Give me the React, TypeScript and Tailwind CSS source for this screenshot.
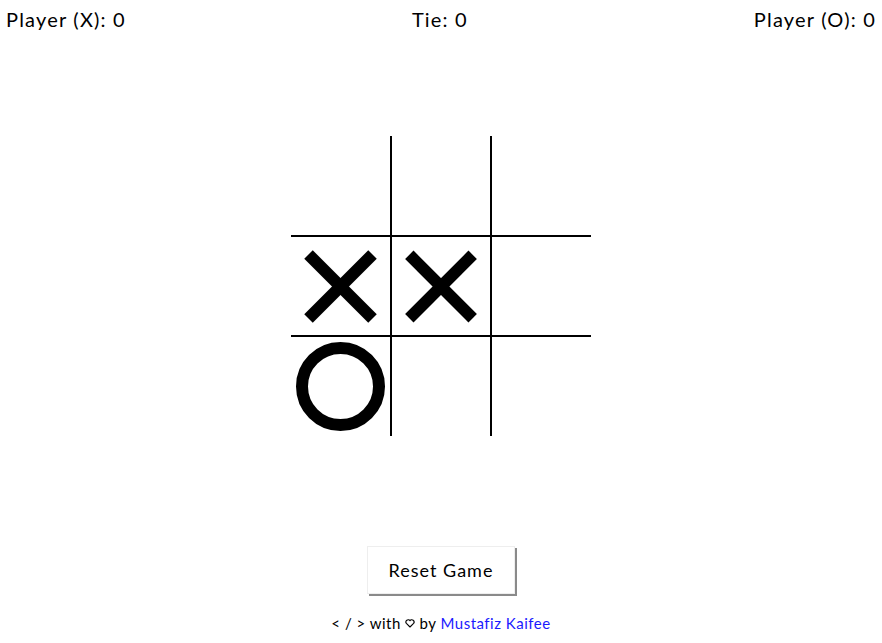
import { useState } from 'react';

type Mark = 'X' | 'O' | null;

function XMark() {
  return (
    <svg width="99" height="99" viewBox="0 0 99 99" className="block">
      <line x1="17.5" y1="17.5" x2="81.5" y2="81.5" stroke="black" strokeWidth="12" />
      <line x1="81.5" y1="17.5" x2="17.5" y2="81.5" stroke="black" strokeWidth="12" />
    </svg>
  );
}

function OMark() {
  return (
    <svg width="99" height="99" viewBox="0 0 99 99" className="block">
      <circle cx="49.5" cy="49.5" r="38.5" fill="none" stroke="black" strokeWidth="12" />
    </svg>
  );
}

function Heart() {
  return (
    <svg width="10" height="9" viewBox="0 0 10 9" className="inline-block align-[1px]" aria-label="love">
      <path
        d="M5 8 L1.4 4.4 A2.1 2.1 0 0 1 5 1.7 A2.1 2.1 0 0 1 8.6 4.4 Z"
        fill="none"
        stroke="black"
        strokeWidth="1.1"
        strokeLinejoin="round"
      />
    </svg>
  );
}

const cellBorders = [
  'border-r-2 border-b-2',
  'border-r-2 border-b-2',
  'border-b-2',
  'border-r-2 border-b-2',
  'border-r-2 border-b-2',
  'border-b-2',
  'border-r-2',
  'border-r-2',
  '',
];

export default function App() {
  const [board] = useState<Mark[]>([null, null, null, 'X', 'X', null, 'O', null, null]);

  return (
    <div className="min-h-screen bg-white text-black font-['Lato','Open_Sans',sans-serif]">
      <header className="flex justify-between items-start px-[6px] pt-[5px] h-10 text-[20px] leading-7 tracking-[1.2px]">
        <span>Player (X): 0</span>
        <span>Tie: 0</span>
        <span>Player (O): 0</span>
      </header>

      <main className="flex flex-col items-center">
        <div className="mt-[96px] grid grid-cols-[101px_100px_99px] grid-rows-[101px_100px_99px]">
          {board.map((mark, i) => (
            <div
              key={i}
              className={`box-border border-black flex items-start justify-start overflow-hidden ${cellBorders[i]}`}
            >
              {mark === 'X' && <XMark />}
              {mark === 'O' && <OMark />}
            </div>
          ))}
        </div>

        <button className="mt-[110px] w-[148px] h-[48px] bg-white border border-[#eeeeee] shadow-[2px_2px_0_#8a8a8a] text-[18px] tracking-[1px]">
          Reset Game
        </button>

        <p className="mt-[17px] text-[15px] leading-6 tracking-[0.5px]">
          &lt; / &gt; with <Heart /> by{' '}
          <a href="#" className="text-[#1a1aff]">Mustafiz Kaifee</a>
        </p>
      </main>
    </div>
  );
}
